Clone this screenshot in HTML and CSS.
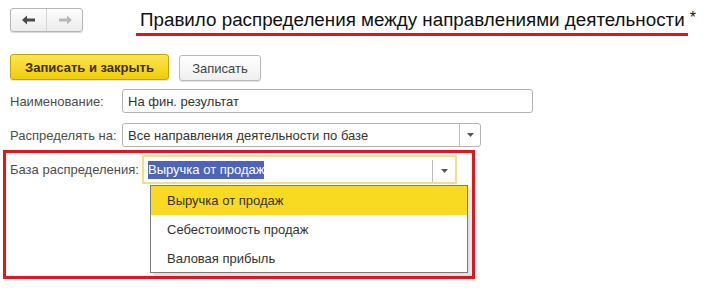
FILE: index.html
```html
<!DOCTYPE html>
<html lang="ru">
<head>
<meta charset="utf-8">
<link rel="stylesheet" href="styles.css">
</head>
<body>
<div class="header">
  <div class="nav">
    <span class="nav-btn">
      <svg width="14" height="10" viewBox="0 0 14 10"><path d="M0 5 L5 0.5 L5 3.5 L13 3.5 L13 6.5 L5 6.5 L5 9.5 Z" fill="#4a4a4a"/></svg>
    </span>
    <span class="nav-btn">
      <svg width="14" height="10" viewBox="0 0 14 10"><path d="M14 5 L9 0.5 L9 3.5 L1 3.5 L1 6.5 L9 6.5 L9 9.5 Z" fill="#b8b8b8"/></svg>
    </span>
  </div>
  <div class="title"><span class="title-text">Правило распределения между направлениями деятельности</span><span class="star">*</span></div>
</div>
<div class="toolbar">
  <span class="btn btn-primary">Записать и закрыть</span>
  <span class="btn">Записать</span>
</div>
<div class="row">
  <span class="label">Наименование:</span>
  <div class="input input-name">На фин. результат</div>
</div>
<div class="row">
  <span class="label">Распределять на:</span>
  <div class="input select select-dist"><span class="value">Все направления деятельности по базе</span><span class="arrow"><svg width="7" height="4" viewBox="0 0 7 4"><path d="M0 0 L7 0 L3.5 4 Z" fill="#555"/></svg></span></div>
</div>
<div class="highlight-box">
  <div class="row row-base">
    <span class="label">База распределения:</span>
    <div class="input select select-base"><span class="value"><span class="sel">Выручка от продаж</span></span><span class="arrow"><svg width="7" height="4" viewBox="0 0 7 4"><path d="M0 0 L7 0 L3.5 4 Z" fill="#555"/></svg></span></div>
  </div>
  <ul class="menu">
    <li class="item active">Выручка от продаж</li>
    <li class="item">Себестоимость продаж</li>
    <li class="item">Валовая прибыль</li>
  </ul>
</div>
</body>
</html>
```
FILE: styles.css
```css
* { box-sizing: border-box; }
html, body { margin: 0; padding: 0; background: #fff; }
body {
  font-family: Arial, "Liberation Sans", sans-serif;
  font-size: 13px;
  color: #333;
  width: 722px;
  height: 295px;
  overflow: hidden;
}
.header {
  display: flex;
  align-items: flex-start;
  height: 36px;
}
.nav {
  display: flex;
  margin: 8px 0 0 10px;
  width: 73px;
  height: 24px;
  border: 1px solid #b5b5b5;
  border-radius: 3px;
  background: linear-gradient(#fdfdfd, #ececec);
  box-shadow: 0 1px 1px rgba(0,0,0,0.15);
}
.nav-btn {
  flex: 1;
  display: flex;
  align-items: center;
  justify-content: center;
}
.nav-btn + .nav-btn { border-left: 1px solid #d4d4d4; }
.title {
  margin-left: 53px;
  padding-top: 9px;
  font-size: 18.8px;
  color: #111;
  white-space: nowrap;
  line-height: 22px;
  display: flex;
  align-items: flex-start;
}
.title-text {
  display: inline-block;
  padding: 0 3px 2px 4px;
  border-bottom: 3px solid #e0141c;
  line-height: 22px;
}
.star {
  font-size: 16px;
  line-height: 16px;
  margin-left: 2px;
  margin-top: 1px;
}
.toolbar {
  display: flex;
  gap: 10px;
  margin: 18px 0 0 10px;
  align-items: flex-start;
}
.btn {
  display: inline-flex;
  align-items: center;
  justify-content: center;
  height: 26px;
  width: 82px;
  margin-top: 1px;
  border: 1px solid #b9b9b9;
  border-radius: 3px;
  background: linear-gradient(#ffffff, #efefef);
  box-shadow: 0 1px 1px rgba(0,0,0,0.12);
  color: #444;
  font-size: 13px;
}
.btn-primary {
  width: 159px;
  margin-top: 0;
  font-weight: bold;
  color: #3b3100;
  border-color: #c8a400;
  background: linear-gradient(#fbe54f, #f2cd06);
}
.row {
  display: flex;
  align-items: center;
  padding-left: 10px;
  height: 24px;
  margin-top: 10px;
}
.toolbar + .row { margin-top: 8px; }
.label {
  width: 112px;
  color: #4d4d4d;
  white-space: nowrap;
}
.input {
  height: 24px;
  border: 1px solid #b3b3b3;
  border-radius: 3px;
  background: #fff;
  color: #333;
  display: flex;
  align-items: center;
  padding-left: 5px;
}
.input-name { width: 411px; }
.select { padding-left: 0; }
.select .value { flex: 1; padding-left: 5px; white-space: nowrap; }
.select .arrow {
  width: 21px;
  height: 100%;
  border-left: 1px solid #bdbdbd;
  display: flex;
  align-items: center;
  justify-content: center;
}
.select-dist { width: 359px; }
.highlight-box {
  position: relative;
  margin: 3px 0 0 3px;
  width: 472px;
  height: 129px;
  border: 3px solid #e8131b;
}
.row-base {
  margin-top: 1px;
  padding-left: 4px;
  height: 30px;
  align-items: center;
}
.row-base .label { width: 132px; }
.select-base {
  width: 315px;
  height: 29px;
  margin-top: 1px;
  border: 2px solid #f3df88;
  border-radius: 1px;
}
.select-base .value { padding-left: 4px; }
.select-base .arrow { width: 23px; height: 22px; margin-top: 2px; }
.sel {
  background: #4d64b9;
  color: #fff;
  padding: 1px 0 2px;
}
.menu {
  position: absolute;
  left: 144px;
  top: 32px;
  width: 318px;
  height: 88px;
  margin: 0;
  padding: 0;
  list-style: none;
  border: 1px solid #7a7a7a;
  background: #fff;
  box-shadow: 3px 3px 2px rgba(0,0,0,0.12);
}
.item {
  height: 29px;
  line-height: 29px;
  padding-left: 16px;
  color: #333;
}
.item.active { background: #f8da22; }
```
